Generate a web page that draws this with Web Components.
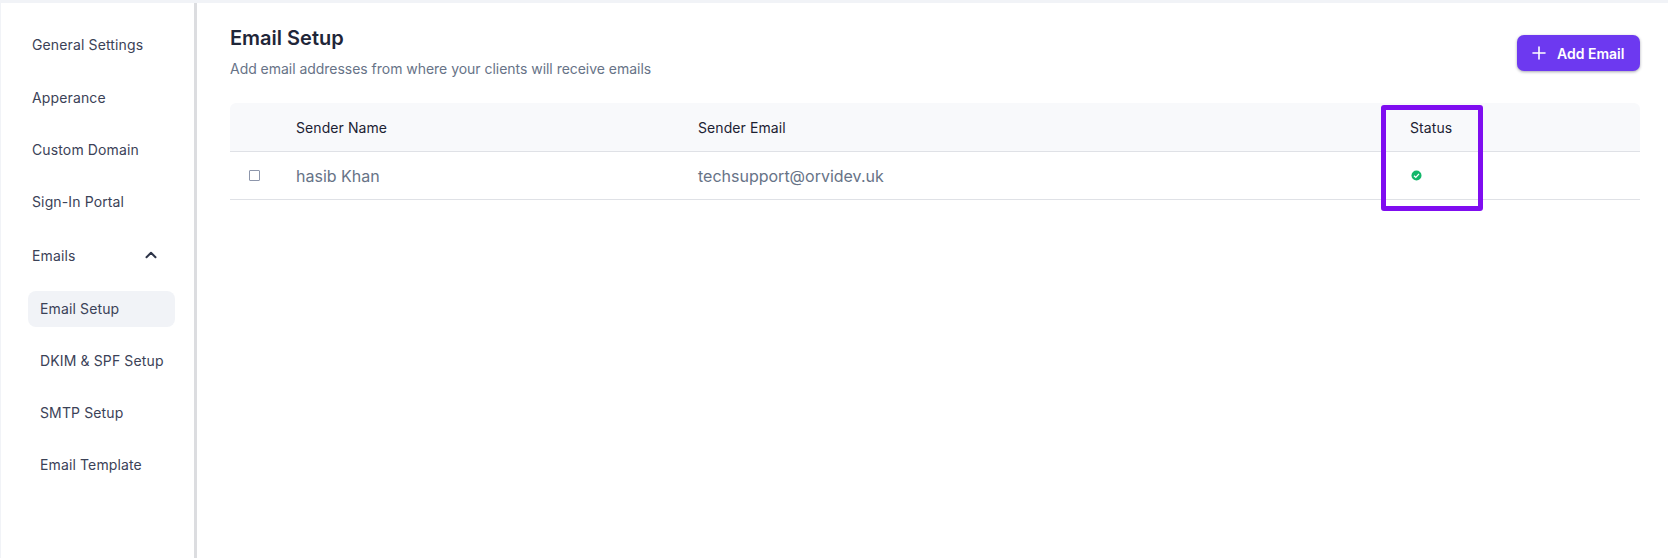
<!DOCTYPE html>
<html><head><meta charset="utf-8"><title>Email Setup</title>
<style>
html,body{margin:0;height:100%;background:#fff}
body{font-family:Inter,"Liberation Sans",sans-serif;overflow:hidden}
</style></head>
<body>
<settings-app></settings-app>
<template id="t-app">
<style>
:host{display:flex;flex-direction:column;height:558px;background:#f1f3f7;padding:3px 0 0 1px;box-sizing:border-box;position:relative}
.wrap{flex:1;display:flex;background:#fff;min-height:0}
</style>
<div class="wrap"><settings-nav></settings-nav><email-setup></email-setup></div>
</template>
<template id="t-nav">
<style>
:host{display:block;width:196px;box-sizing:border-box;border-right:3px solid #dcdde0;background:#fff;padding-top:16px;flex:none;color:#3b4257;font-size:14px;letter-spacing:.13px}
.item{height:52px;display:flex;align-items:center;padding-left:31px;box-sizing:border-box;justify-content:space-between;padding-right:36px}
.item.first{padding-bottom:2px}
.item.e{height:56px}
.sub{margin:8px 19px 0 27px}
.s{height:36px;margin-bottom:16px;display:flex;align-items:center;padding:0 0 2px 12px;box-sizing:border-box;border-radius:8px}
.s.on{background:#f1f3f7}
svg{display:block}
</style>
<div class="item first">General Settings</div>
<div class="item">Apperance</div>
<div class="item">Custom Domain</div>
<div class="item">Sign-In Portal</div>
<div class="item e">Emails<svg width="14" height="14" viewBox="0 0 14 14" fill="none" stroke="#2d3448" stroke-width="2" stroke-linecap="round" stroke-linejoin="round"><path d="M2.5 9.2 7 4.8l4.5 4.4"/></svg></div>
<div class="sub">
<div class="s on">Email Setup</div>
<div class="s">DKIM &amp; SPF Setup</div>
<div class="s">SMTP Setup</div>
<div class="s">Email Template</div>
</div>
</template>
<template id="t-setup">
<style>
:host{display:block;flex:1;min-width:0;padding:0 28px 0 33px;position:relative}
.head{display:flex;justify-content:space-between;align-items:flex-start;height:100px}
h1{margin:21px 0 0;font-size:20px;line-height:28px;font-weight:600;color:#1f2639}
p{margin:7px 0 0;font-size:14px;line-height:20px;color:#677387;letter-spacing:-.03px}
button{all:unset;box-sizing:border-box;margin-top:32px;width:123px;height:36px;background:#6d39f0;color:#fff;border-radius:7px;font-size:14px;font-weight:600;display:flex;align-items:center;padding-left:15px;gap:11px;box-shadow:0 1px 3px rgba(30,30,60,.4);font-family:inherit}
.row,.hdr{display:grid;grid-template-columns:66px 402px 712px 1fr;align-items:center;height:48px;box-sizing:border-box;border-bottom:1px solid #dfe1e6}
.hdr{height:49px;background:#f8f9fb;border-radius:6px 6px 0 0;font-size:14px;font-weight:400;letter-spacing:.08px;color:#1c2233}
.row{font-size:16px;color:#677387}
.box{width:9px;height:9px;border:1px solid #8d96ab;border-radius:1px;margin-left:19px}
.status{margin-left:1px}
.anno{position:absolute;left:1184px;top:102px;width:102px;height:106px;box-sizing:border-box;border:5px solid #7f0df0;border-radius:3px}
svg{display:block}
</style>
<div class="head">
<div><h1>Email Setup</h1><p>Add email addresses from where your clients will receive emails</p></div>
<button><svg width="14" height="14" viewBox="0 0 14 14" stroke="#fff" stroke-width="1.6" stroke-linecap="round"><path d="M7 1v12M1 7h12"/></svg>Add Email</button>
</div>
<div class="hdr"><span></span><span>Sender Name</span><span>Sender Email</span><span>Status</span></div>
<div class="row"><span class="box"></span><span>hasib Khan</span><span>techsupport@orvidev.uk</span>
<svg class="status" width="11" height="11" viewBox="0 0 11 11"><circle cx="5.5" cy="5.5" r="5" fill="#12b76a"/><path d="M3 5.7l1.8 1.7L8 3.9" fill="none" stroke="#fff" stroke-width="1.3"/></svg></div>
<div class="anno"></div>
</template>
<script>
const mk=(name,id)=>customElements.define(name,class extends HTMLElement{
constructor(){super();this.attachShadow({mode:'open'}).appendChild(document.getElementById(id).content.cloneNode(true));}
});
mk('settings-nav','t-nav');mk('email-setup','t-setup');mk('settings-app','t-app');
</script>
</body></html>
